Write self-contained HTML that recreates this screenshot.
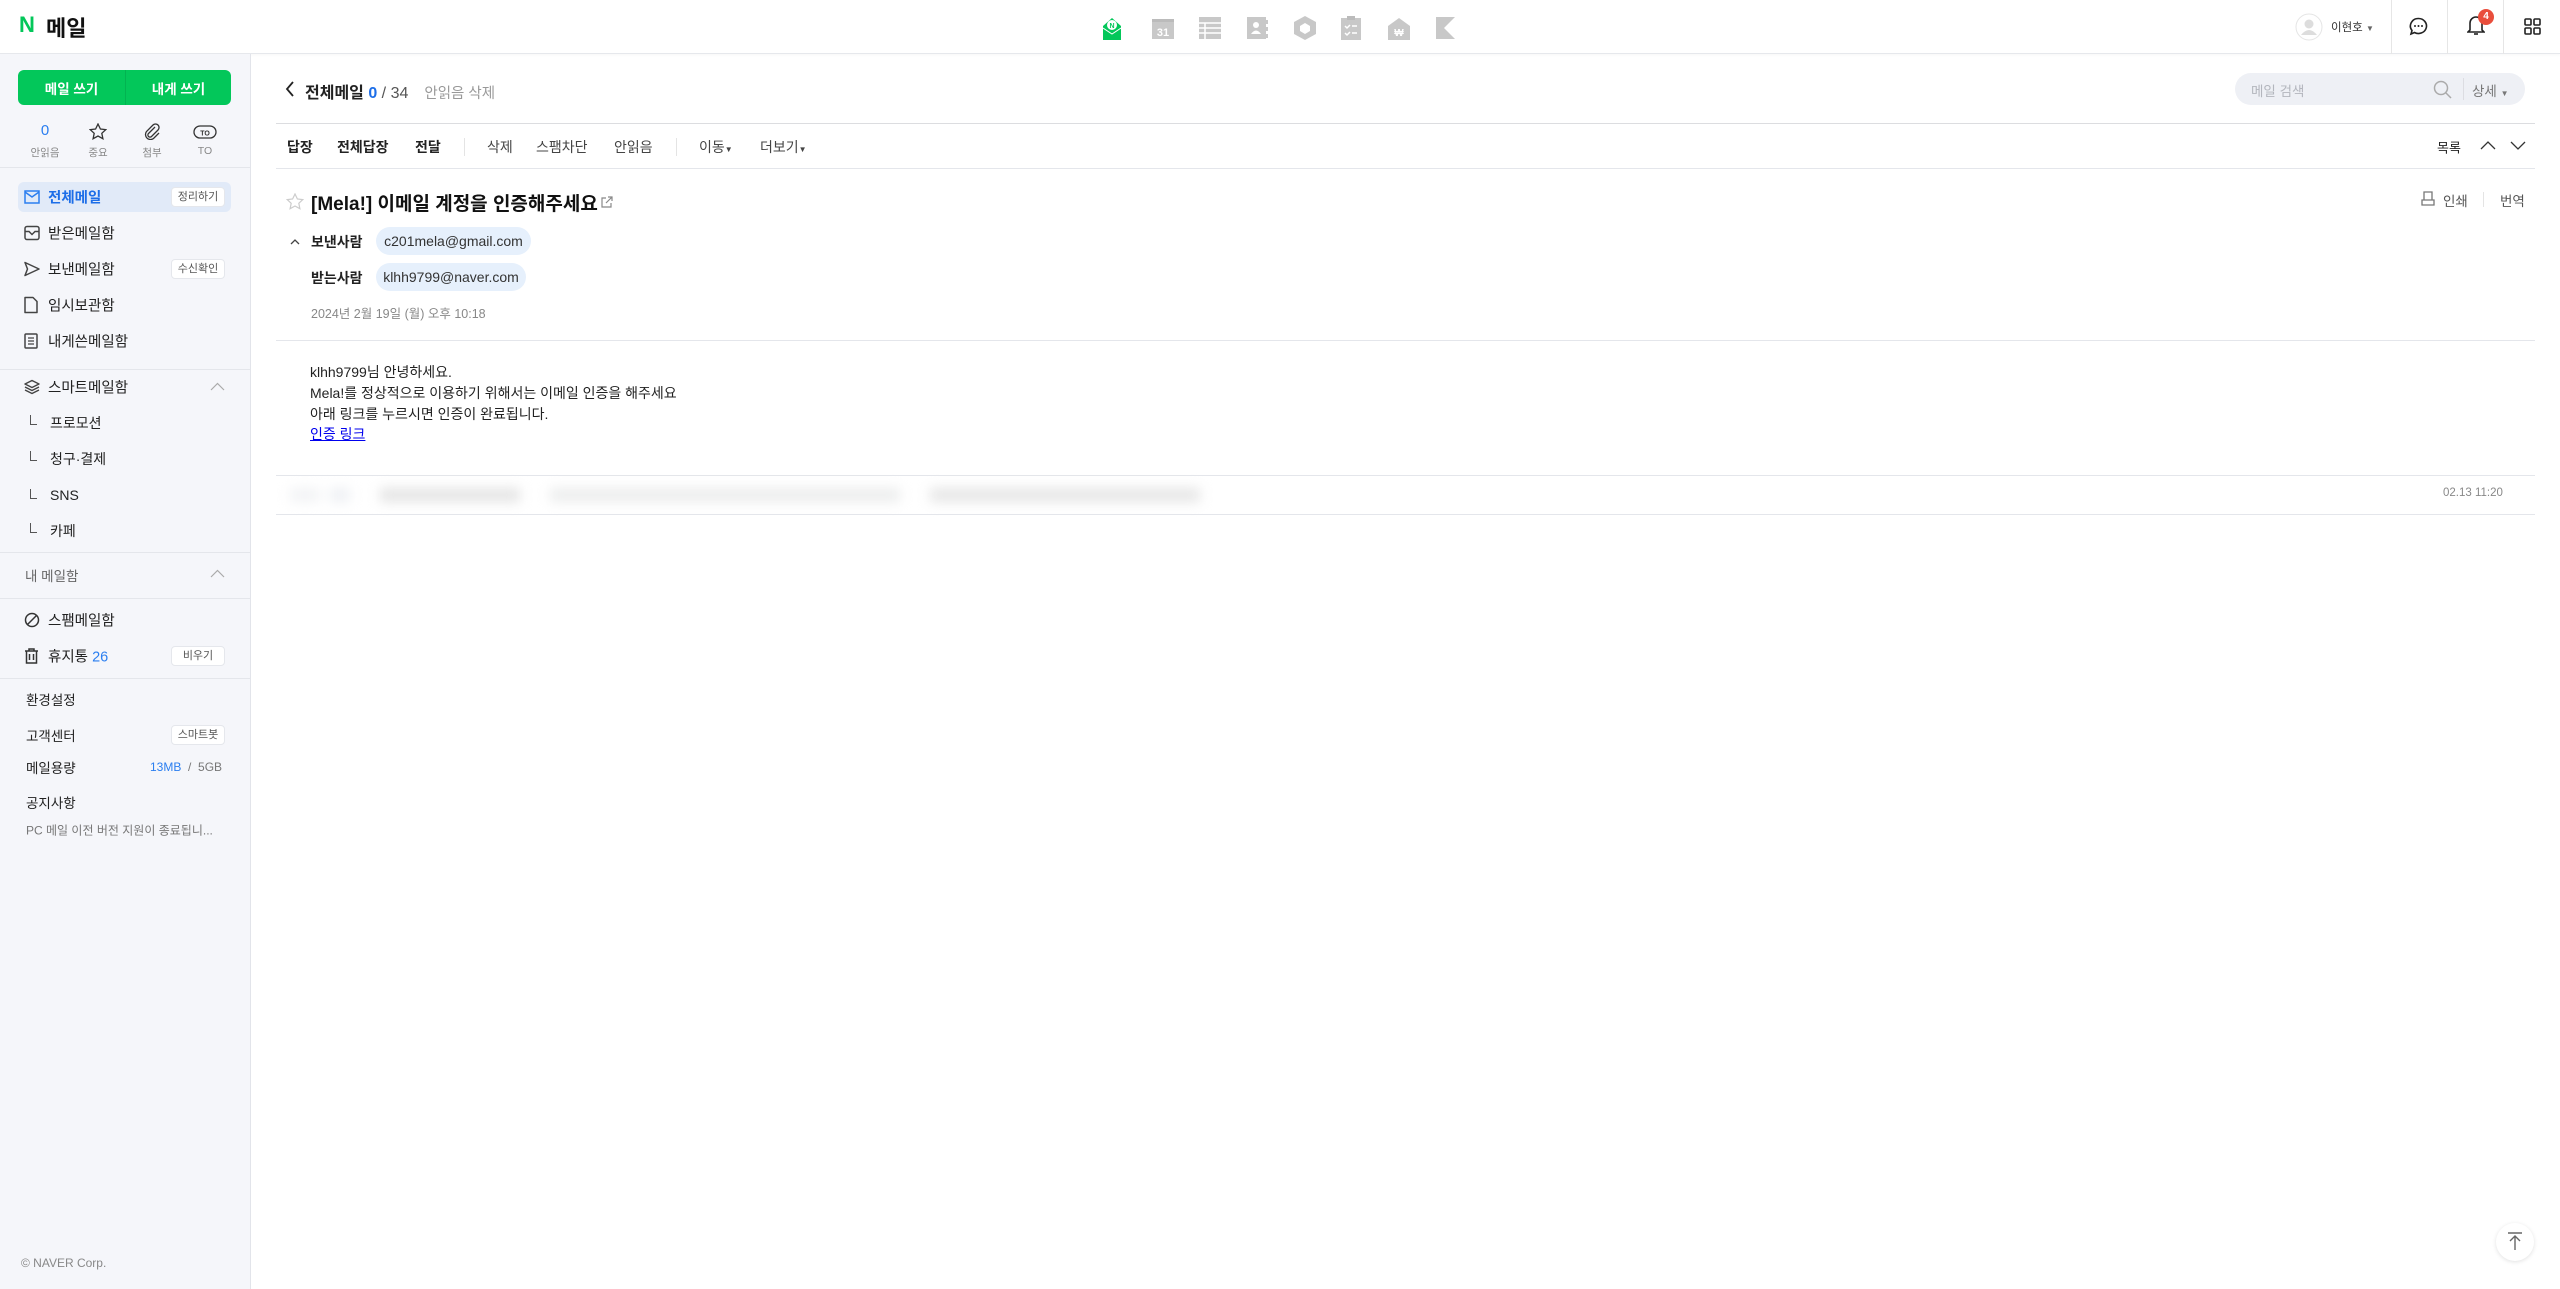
<!DOCTYPE html>
<html><head><meta charset="utf-8">
<style>
*{margin:0;padding:0;box-sizing:border-box}
body{width:2560px;height:1289px;position:relative;background:#fff;font-family:"Liberation Sans","Noto Sans CJK KR",sans-serif;color:#222;overflow:hidden}
.a{position:absolute;white-space:nowrap}
.side{position:absolute;left:0;top:54px;width:251px;height:1235px;background:#f5f6fa;border-right:1px solid #e2e4ea}
.hr{position:absolute;height:1px;background:#e4e6eb}
.it{position:absolute;left:48px;font-size:14.5px;color:#222;transform:translateY(-50%)}
.ic{position:absolute;left:24px;transform:translateY(-50%)}
.tag{position:absolute;left:171px;width:54px;height:20px;border:1px solid #e5e7ec;background:#fff;border-radius:4px;font-size:11px;color:#555;text-align:center;line-height:18px;transform:translateY(-50%)}
.sub{position:absolute;left:30px;font-size:14px;transform:translateY(-50%)}
.sub::before{content:"";position:absolute;left:0;top:2px;width:6px;height:9px;border-left:1.5px solid #555;border-bottom:1.5px solid #555}
.sub span{margin-left:20px}
.tb{position:absolute;top:147px;transform:translateY(-50%);font-size:14px}
.nav svg{position:absolute;top:16px}
</style></head><body>
<!-- header -->
<div class="a" style="left:0;top:0;width:2560px;height:54px;border-bottom:1px solid #e6e8ec;box-shadow:0 1px 3px rgba(0,0,0,.04)"></div>
<div class="a" style="left:19px;top:12px;font-size:22px;font-weight:900;color:#03c75a">N</div>
<div class="a" style="left:46px;top:11px;font-size:22px;font-weight:700;color:#111">메일</div>
<div class="nav">
<svg style="left:1103px" width="18" height="24" viewBox="0 0 18 24"><path d="M0 10 L9 2 L18 10 V24 H0Z" fill="#03c75a"/><circle cx="9" cy="9" r="5" fill="#fff"/><text x="9" y="12" font-size="7" font-weight="bold" text-anchor="middle" fill="#03c75a" font-family="Liberation Sans">N</text><path d="M0 12 L9 18 L18 12" stroke="#fff" fill="none" stroke-width="1"/></svg>
<svg style="left:1152px;top:17px" width="22" height="22"><rect x="0" y="2" width="22" height="20" fill="#c8c8c8"/><rect x="0" y="2" width="22" height="3" fill="#bbb"/><text x="11" y="19" font-size="11" font-weight="bold" text-anchor="middle" fill="#fff" font-family="Liberation Sans">31</text></svg>
<svg style="left:1199px;top:17px" width="22" height="22"><rect width="22" height="22" fill="#c8c8c8"/><path d="M0 6H22M0 11H22M0 16H22M6 6V22" stroke="#fff" stroke-width="1.5"/></svg>
<svg style="left:1247px;top:17px" width="22" height="22"><rect width="19" height="22" fill="#c8c8c8"/><circle cx="9" cy="8" r="3" fill="#fff"/><path d="M4 17 Q9 10 14 17Z" fill="#fff"/><path d="M20 3v4M20 10v4M20 17v4" stroke="#c8c8c8" stroke-width="2"/></svg>
<svg style="left:1294px;top:16px" width="22" height="24"><path d="M11 0 L22 6 V18 L11 24 L0 18 V6Z" fill="#c8c8c8"/><path d="M11 7 L16 10 V15 L11 18 L6 15 V10Z" fill="#fff"/></svg>
<svg style="left:1341px;top:16px" width="20" height="24"><rect y="2" width="20" height="22" fill="#c8c8c8"/><rect x="6" y="0" width="8" height="4" fill="#bbb"/><path d="M4 10l2 2 3-3M11 10h5M4 17l2 2 3-3M11 17h5" stroke="#fff" stroke-width="1.5" fill="none"/></svg>
<svg style="left:1388px;top:16px" width="22" height="24"><path d="M0 10 L11 2 L22 10 V24 H0Z" fill="#c8c8c8"/><text x="11" y="20" font-size="10" font-weight="bold" text-anchor="middle" fill="#fff" font-family="Liberation Sans">₩</text></svg>
<svg style="left:1436px;top:17px" width="19" height="22"><path d="M0 0H19L8 11 19 22H0Z" fill="#c8c8c8"/></svg>
</div>
<svg class="a" style="left:2295px;top:13px" width="28" height="28"><circle cx="14" cy="14" r="13" fill="#fff" stroke="#e5e5e5"/><circle cx="14" cy="11" r="4.5" fill="#ddd"/><path d="M6 22 Q14 12 22 22Z" fill="#ddd"/></svg>
<div class="a" style="left:2331px;top:19px;font-size:11.5px;color:#333">이현호 <span style="font-size:8px;color:#666">▼</span></div>
<div class="a" style="left:2391px;top:0;width:1px;height:54px;background:#e6e6e6"></div>
<div class="a" style="left:2447px;top:0;width:1px;height:54px;background:#e6e6e6"></div>
<div class="a" style="left:2503px;top:0;width:1px;height:54px;background:#e6e6e6"></div>
<svg class="a" style="left:2409px;top:17px" width="19" height="19" viewBox="0 0 19 19"><path d="M9.5 1.5a8 7.5 0 1 1-4 14L2 17l1-3.5A8 7.5 0 0 1 9.5 1.5z" fill="none" stroke="#222" stroke-width="1.6"/><circle cx="6" cy="9" r="1" fill="#222"/><circle cx="9.5" cy="9" r="1" fill="#222"/><circle cx="13" cy="9" r="1" fill="#222"/></svg>
<svg class="a" style="left:2467px;top:14px" width="18" height="22" viewBox="0 0 18 22"><path d="M3 16V9a6 6 0 0 1 12 0v7l2 2H1z" fill="none" stroke="#222" stroke-width="1.6"/><path d="M7 20h4" stroke="#222" stroke-width="1.6"/></svg>
<div class="a" style="left:2478px;top:9px;width:16px;height:16px;border-radius:8px;background:#e94e3c;color:#fff;font-size:10px;font-weight:bold;text-align:center;line-height:16px">4</div>
<svg class="a" style="left:2524px;top:18px" width="17" height="17"><g fill="none" stroke="#222" stroke-width="1.6"><rect x="1" y="1" width="6" height="6" rx="1"/><rect x="10" y="1" width="6" height="6" rx="1"/><rect x="1" y="10" width="6" height="6" rx="1"/><rect x="10" y="10" width="6" height="6" rx="1"/></g></svg>

<!-- sidebar -->
<div class="side">
<div class="a" style="left:18px;top:16px;width:213px;height:35px;border-radius:6px;background:#03c75a"></div>
<div class="a" style="left:125px;top:16px;width:1px;height:35px;background:#02b351"></div>
<div class="a" style="left:18px;top:24px;width:107px;text-align:center;color:#fff;font-size:13.5px;font-weight:bold">메일 쓰기</div>
<div class="a" style="left:125px;top:24px;width:107px;text-align:center;color:#fff;font-size:13.5px;font-weight:bold">내게 쓰기</div>
<div class="a" style="left:35px;top:68px;width:20px;text-align:center;color:#2a7ef0;font-size:15px">0</div>
<svg class="a" style="left:89px;top:69px" width="18" height="17"><path d="M9 1l2.4 5 5.4.6-4 3.7 1.1 5.4L9 13 4.1 15.7l1.1-5.4-4-3.7 5.4-.6z" fill="none" stroke="#333" stroke-width="1.3"/></svg>
<svg class="a" style="left:144px;top:69px" width="16" height="17"><path d="M11 4L4.5 10.5a2 2 0 0 0 3 3L14 7a3.5 3.5 0 0 0-5-5L2.5 8.5a5 5 0 0 0 7 7L15 10" fill="none" stroke="#333" stroke-width="1.3"/></svg>
<svg class="a" style="left:193px;top:71px" width="24" height="14"><rect x="1" y="1" width="22" height="12" rx="6" fill="none" stroke="#333" stroke-width="1.3"/><text x="12" y="10.5" font-size="7" font-weight="bold" text-anchor="middle" font-family="Liberation Sans" fill="#333">TO</text></svg>
<div class="a" style="left:25px;top:91px;width:40px;text-align:center;color:#888;font-size:10.5px">안읽음</div>
<div class="a" style="left:78px;top:91px;width:40px;text-align:center;color:#888;font-size:10.5px">중요</div>
<div class="a" style="left:132px;top:91px;width:40px;text-align:center;color:#888;font-size:10.5px">첨부</div>
<div class="a" style="left:185px;top:91px;width:40px;text-align:center;color:#888;font-size:10.5px">TO</div>
<div class="hr" style="left:0;top:113px;width:250px"></div>
<div class="a" style="left:18px;top:128px;width:213px;height:30px;border-radius:6px;background:#e1eaf8"></div>
</div>
<div class="a" style="left:0;top:0">
<svg class="ic" style="top:197px" width="16" height="14"><rect x="1" y="1" width="14" height="12" fill="none" stroke="#2a7ef0" stroke-width="1.5"/><path d="M1 2l7 5 7-5" fill="none" stroke="#2a7ef0" stroke-width="1.5"/></svg>
<div class="it" style="top:197px;color:#1d6ee8;font-weight:bold">전체메일</div>
<div class="tag" style="top:197px">정리하기</div>
<svg class="ic" style="top:233px" width="16" height="15"><rect x="1" y="1" width="14" height="13" rx="2" fill="none" stroke="#444" stroke-width="1.5"/><path d="M1 6h4l3 3 3-3h4" fill="none" stroke="#444" stroke-width="1.5"/></svg>
<div class="it" style="top:233px">받은메일함</div>
<svg class="ic" style="top:269px" width="16" height="15"><path d="M1 1l14 6.5L1 14l2.5-6.5z" fill="none" stroke="#444" stroke-width="1.5" stroke-linejoin="round"/></svg>
<div class="it" style="top:269px">보낸메일함</div>
<div class="tag" style="top:269px">수신확인</div>
<svg class="ic" style="top:305px" width="14" height="17"><path d="M1 1h8l4 4v11H1z" fill="none" stroke="#444" stroke-width="1.5" stroke-linejoin="round"/></svg>
<div class="it" style="top:305px">임시보관함</div>
<svg class="ic" style="top:341px" width="14" height="16"><rect x="1" y="1" width="12" height="14" rx="1" fill="none" stroke="#444" stroke-width="1.5"/><path d="M4 5h6M4 8h6M4 11h6" stroke="#444" stroke-width="1.3"/></svg>
<div class="it" style="top:341px">내게쓴메일함</div>
<div class="hr" style="left:0;top:369px;width:250px"></div>
<svg class="ic" style="top:387px" width="16" height="15"><path d="M8 1l7 3.5-7 3.5-7-3.5z M1 7.5l7 3.5 7-3.5 M1 10.5l7 3.5 7-3.5" fill="none" stroke="#444" stroke-width="1.4" stroke-linejoin="round"/></svg>
<div class="it" style="top:387px">스마트메일함</div>
<svg class="a" style="left:210px;top:382px" width="15" height="9"><path d="M1 8l6.5-6.5L14 8" fill="none" stroke="#aaa" stroke-width="1.2"/></svg>
<div class="sub" style="top:423px"><span>프로모션</span></div>
<div class="sub" style="top:459px"><span>청구·결제</span></div>
<div class="sub" style="top:495px"><span>SNS</span></div>
<div class="sub" style="top:531px"><span>카페</span></div>
<div class="hr" style="left:0;top:552px;width:250px"></div>
<div class="it" style="left:25px;top:575px;color:#666;font-size:13.5px">내 메일함</div>
<svg class="a" style="left:210px;top:569px" width="15" height="9"><path d="M1 8l6.5-6.5L14 8" fill="none" stroke="#aaa" stroke-width="1.2"/></svg>
<div class="hr" style="left:0;top:598px;width:250px"></div>
<svg class="ic" style="top:620px" width="16" height="16"><circle cx="8" cy="8" r="6.5" fill="none" stroke="#333" stroke-width="1.5"/><path d="M3.5 12.5l9-9" stroke="#333" stroke-width="1.5"/></svg>
<div class="it" style="top:620px">스팸메일함</div>
<svg class="ic" style="top:656px" width="15" height="16"><path d="M1 3h13M5 3V1h5v2M2.5 3v12h10V3M5.5 6v6M9.5 6v6" fill="none" stroke="#333" stroke-width="1.5"/></svg>
<div class="it" style="top:656px">휴지통 <span style="color:#2a7ef0">26</span></div>
<div class="tag" style="top:656px">비우기</div>
<div class="hr" style="left:0;top:678px;width:250px"></div>
<div class="it" style="left:26px;top:699px;font-size:13.5px">환경설정</div>
<div class="it" style="left:26px;top:735px;font-size:13.5px">고객센터</div>
<div class="tag" style="top:735px">스마트봇</div>
<div class="it" style="left:26px;top:767px;font-size:13.5px">메일용량</div>
<div class="it" style="left:150px;top:767px;font-size:12px;color:#2a7ef0">13MB <span style="color:#777">&nbsp;/&nbsp; 5GB</span></div>
<div class="it" style="left:26px;top:802px;font-size:13.5px">공지사항</div>
<div class="it" style="left:26px;top:830px;font-size:12px;color:#777">PC 메일 이전 버전 지원이 종료됩니...</div>
<div class="it" style="left:21px;top:1263px;font-size:12px;color:#888">© NAVER Corp.</div>
</div>

<!-- main -->
<svg class="a" style="left:285px;top:81px" width="10" height="16"><path d="M8 1L2 8l6 7" fill="none" stroke="#222" stroke-width="1.8"/></svg>
<div class="a" style="left:305px;top:79px;font-size:16px;font-weight:bold">전체메일 <span style="color:#1d6ee8">0</span><span style="font-weight:normal;color:#555"> / 34</span><span style="font-weight:normal;color:#999;font-size:14.5px;margin-left:16px">안읽음 삭제</span></div>
<div class="a" style="left:2235px;top:73px;width:290px;height:32px;border-radius:16px;background:#eef0f5"></div>
<div class="a" style="left:2251px;top:80px;font-size:13.5px;color:#b3b6bd">메일 검색</div>
<svg class="a" style="left:2433px;top:80px" width="19" height="19"><circle cx="8" cy="8" r="6.5" fill="none" stroke="#aaa" stroke-width="1.5"/><path d="M13 13l5 5" stroke="#aaa" stroke-width="1.5"/></svg>
<div class="a" style="left:2463px;top:78px;width:1px;height:22px;background:#dcdde2"></div>
<div class="a" style="left:2472px;top:80px;font-size:13.5px;color:#777">상세 <span style="font-size:8px">▼</span></div>
<div class="hr" style="left:276px;top:123px;width:2259px;background:#dcdde0"></div>
<div class="tb" style="left:287px;font-weight:bold">답장</div>
<div class="tb" style="left:337px;font-weight:bold">전체답장</div>
<div class="tb" style="left:415px;font-weight:bold">전달</div>
<div class="a" style="left:464px;top:138px;width:1px;height:18px;background:#e4e4e4"></div>
<div class="tb" style="left:487px;color:#444">삭제</div>
<div class="tb" style="left:536px;color:#444">스팸차단</div>
<div class="tb" style="left:614px;color:#444">안읽음</div>
<div class="a" style="left:676px;top:138px;width:1px;height:18px;background:#e4e4e4"></div>
<div class="tb" style="left:699px;color:#444">이동<span style="font-size:8px">▼</span></div>
<div class="tb" style="left:760px;color:#444">더보기<span style="font-size:8px">▼</span></div>
<div class="tb" style="left:2437px;font-size:13px">목록</div>
<svg class="a" style="left:2480px;top:140px" width="16" height="10"><path d="M1 9l7-7 7 7" fill="none" stroke="#333" stroke-width="1.3"/></svg>
<svg class="a" style="left:2510px;top:141px" width="16" height="10"><path d="M1 1l7 7 7-7" fill="none" stroke="#333" stroke-width="1.3"/></svg>
<div class="hr" style="left:276px;top:168px;width:2259px"></div>
<svg class="a" style="left:286px;top:193px" width="18" height="17"><path d="M9 1l2.4 5 5.4.6-4 3.7 1.1 5.4L9 13 4.1 15.7l1.1-5.4-4-3.7 5.4-.6z" fill="none" stroke="#ccc" stroke-width="1.2"/></svg>
<div class="a" style="left:311px;top:189px;font-size:19px;font-weight:bold;color:#111">[Mela!] 이메일 계정을 인증해주세요</div>
<svg class="a" style="left:601px;top:196px" width="12" height="12"><path d="M5 2H1v9h9V7M7 1h4v4M11 1L5 7" fill="none" stroke="#888" stroke-width="1.2"/></svg>
<svg class="a" style="left:2421px;top:191px" width="14" height="15"><path d="M3 1h8v8H3zM1 9h12v5H1z" fill="none" stroke="#777" stroke-width="1.3"/></svg>
<div class="a" style="left:2443px;top:190px;font-size:13.5px;color:#555">인쇄</div>
<div class="a" style="left:2483px;top:192px;width:1px;height:15px;background:#e4e4e4"></div>
<div class="a" style="left:2500px;top:190px;font-size:13.5px;color:#555">번역</div>
<svg class="a" style="left:290px;top:238px" width="10" height="7"><path d="M1 6l4-4 4 4" fill="none" stroke="#444" stroke-width="1.3"/></svg>
<div class="a" style="left:311px;top:232px;font-size:14px;font-weight:bold">보낸사람</div>
<div class="a" style="left:376px;top:227px;width:155px;height:28px;border-radius:14px;background:#e6f0fc;font-size:14px;color:#333;line-height:28px;text-align:center">c201mela@gmail.com</div>
<div class="a" style="left:311px;top:268px;font-size:14px;font-weight:bold">받는사람</div>
<div class="a" style="left:376px;top:263px;width:150px;height:28px;border-radius:14px;background:#e6f0fc;font-size:14px;color:#333;line-height:28px;text-align:center">klhh9799@naver.com</div>
<div class="a" style="left:311px;top:303px;font-size:12.5px;color:#888">2024년 2월 19일 (월) 오후 10:18</div>
<div class="hr" style="left:276px;top:340px;width:2259px"></div>
<div class="a" style="left:310px;top:362px;font-size:14px;line-height:20.8px;color:#222">klhh9799님 안녕하세요.<br>Mela!를 정상적으로 이용하기 위해서는 이메일 인증을 해주세요<br>아래 링크를 누르시면 인증이 완료됩니다.<br><span style="color:#0000ee;text-decoration:underline">인증 링크</span></div>
<div class="hr" style="left:276px;top:475px;width:2259px"></div>
<div class="a" style="left:290px;top:480px;width:910px;height:30px;filter:blur(6px)">
<div class="a" style="left:0;top:8px;width:30px;height:14px;background:#f2f3f5"></div>
<div class="a" style="left:40px;top:8px;width:20px;height:14px;background:#eef0f4"></div>
<div class="a" style="left:90px;top:8px;width:140px;height:14px;background:#e4e4e4"></div>
<div class="a" style="left:260px;top:8px;width:350px;height:14px;background:#eceded"></div>
<div class="a" style="left:640px;top:8px;width:270px;height:14px;background:#e6e6e6"></div>
</div>
<div class="a" style="left:2443px;top:487px;font-size:11.5px;color:#888">02.13 11:20</div>
<div class="hr" style="left:276px;top:514px;width:2259px"></div>
<div class="a" style="left:2496px;top:1223px;width:38px;height:38px;border-radius:19px;background:#fff;box-shadow:0 1px 4px rgba(0,0,0,.12)"></div>
<svg class="a" style="left:2507px;top:1232px" width="16" height="18"><path d="M1 1h14M8 4v14M3 9l5-5 5 5" fill="none" stroke="#666" stroke-width="1.4"/></svg>
</body></html>
